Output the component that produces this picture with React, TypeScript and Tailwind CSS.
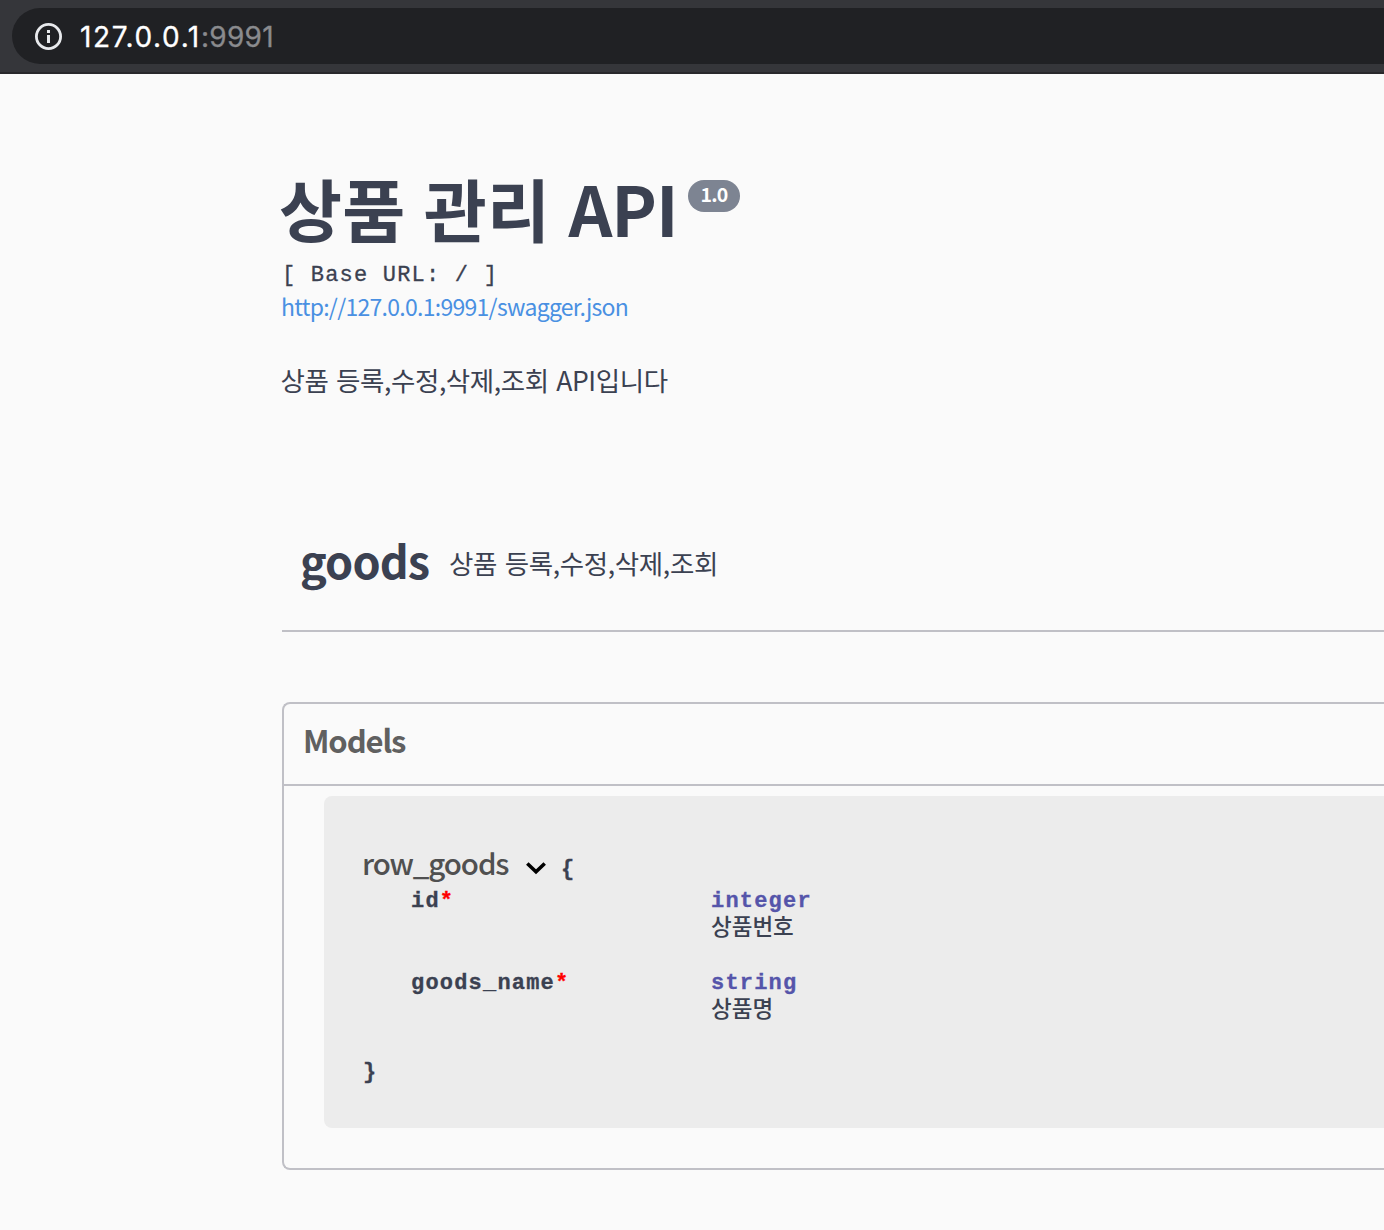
import type { ReactNode } from "react";

const sans = "font-['Noto_Sans_CJK_KR',sans-serif]";
const mono = "font-['Liberation_Mono','Noto_Sans_CJK_KR',monospace]";
const code = "text-[22px] tracking-[1.2px] [-webkit-text-stroke:0.3px]";

function AddressBar() {
  return (
    <header className="h-[74px] border-b-2 border-[#28282b] bg-[#35363a] pt-2 pl-3">
      <div className="flex h-14 items-center rounded-l-full bg-[#202124] pl-[23px]">
        <svg width="27" height="27" viewBox="0 0 27 27" fill="none" className="shrink-0">
          <circle cx="13.5" cy="13.5" r="12.1" stroke="#e8eaed" strokeWidth="2.8" />
          <path d="M12 7h3v3h-3zM12 12h3v8h-3z" fill="#e8eaed" />
        </svg>
        <span className="mt-px ml-[18px] font-['Inter',sans-serif] text-[28px] leading-[56px] tracking-[1.6px] whitespace-nowrap text-white [-webkit-text-stroke:0.3px]">
          127.0.0.1<span className="tracking-[0.3px] text-[#8a8b8e]">:9991</span>
        </span>
      </div>
    </header>
  );
}

function Property({ name, type, children }: { name: string; type: string; children: ReactNode }) {
  return (
    <div className="flex h-[82px] pl-[47px] font-bold">
      <div className={`${code} w-[300px] leading-[28px]`}>
        {name}
        <span className="text-[#ff0000]">*</span>
      </div>
      <div>
        <div className={`${code} h-7 leading-[28px] text-[#5555aa]`}>{type}</div>
        <div className="text-[22.5px] leading-[26px] font-medium">{children}</div>
      </div>
    </div>
  );
}

export default function App() {
  return (
    <div className="h-[1230px] overflow-hidden bg-[#fafafa] text-[#3b4151]">
      <AddressBar />
      <main className="pl-[282px]">
        <section className={`${sans} h-[558px] border-b-2 border-[#c0c0c6] whitespace-nowrap`}>
          <div className="flex h-[186px] items-start pt-[92px]">
            <h1 className="-ml-[3px] w-[397px] text-[68.5px] leading-[84px] font-bold tracking-[0.2px] [word-spacing:2.5px]">
              상품 관리 <span className="tracking-[-1px]">API</span>
            </h1>
            <span className="mt-[14px] ml-3 h-8 w-[52px] rounded-full bg-[#7d8492] text-center text-[19.5px] leading-[28px] font-bold tracking-[-0.8px] text-white">
              1.0
            </span>
          </div>
          <div className={`${mono} ${code} h-[31px] leading-[32px] whitespace-pre`}>[ Base URL: / ]</div>
          <a className="-ml-px block h-8 text-[23px] leading-[30px] tracking-[-0.72px] text-[#4990e2]">
            http://127.0.0.1:9991/swagger.json
          </a>
          <p className="mt-10 -ml-[1.5px] h-10 text-[26.5px] leading-[34px] tracking-[-0.4px] [word-spacing:2px]">상품 등록,수정,삭제,조회 API입니다</p>
          <div className="mt-[130px] flex h-[60px] items-center pl-[18px]">
            <h2 className="mb-[7px] w-[149px] text-[45px] leading-[54px] font-bold tracking-[-0.9px]">goods</h2>
            <p className="mb-px text-[26.5px] leading-10 tracking-[-0.35px] [word-spacing:2px]">상품 등록,수정,삭제,조회</p>
          </div>
        </section>
        <section className="mt-[70px] h-[468px] rounded-l-lg border-2 border-r-0 border-[#c0c0c6]">
          <h3 className={`${sans} h-[82px] border-b-2 border-[#c0c0c6] pl-[19px] text-[31px] leading-[71px] font-bold tracking-[-1.1px] text-[#606060]`}>
            Models
          </h3>
          <div className={`${mono} mt-2.5 ml-10 h-[332px] rounded-l-lg bg-[#ececec] pt-[50px] pl-10`}>
            <div className="flex h-[42px] items-start">
              <span className={`${sans} -ml-0.5 w-[147px] text-[29.5px] leading-[32px] font-medium tracking-[-1.1px] text-[#505050]`}>row_goods</span>
              <svg width="20" height="14" viewBox="0 0 20 14" className="mt-[15px] ml-[17px]" fill="none">
                <path d="M1.300 2.500 10 10.800l8.700-8.300" stroke="#000" strokeWidth="3.6" />
              </svg>
              <span className={`${code} mt-[10px] ml-[15px] leading-7 font-bold`}>{"{"}</span>
            </div>
            <Property name="id" type="integer">상품번호</Property>
            <Property name="goods_name" type="string">상품명</Property>
            <div className={`${code} mt-[7px] -ml-px leading-[28px] font-bold`}>{"}"}</div>
          </div>
        </section>
      </main>
    </div>
  );
}
